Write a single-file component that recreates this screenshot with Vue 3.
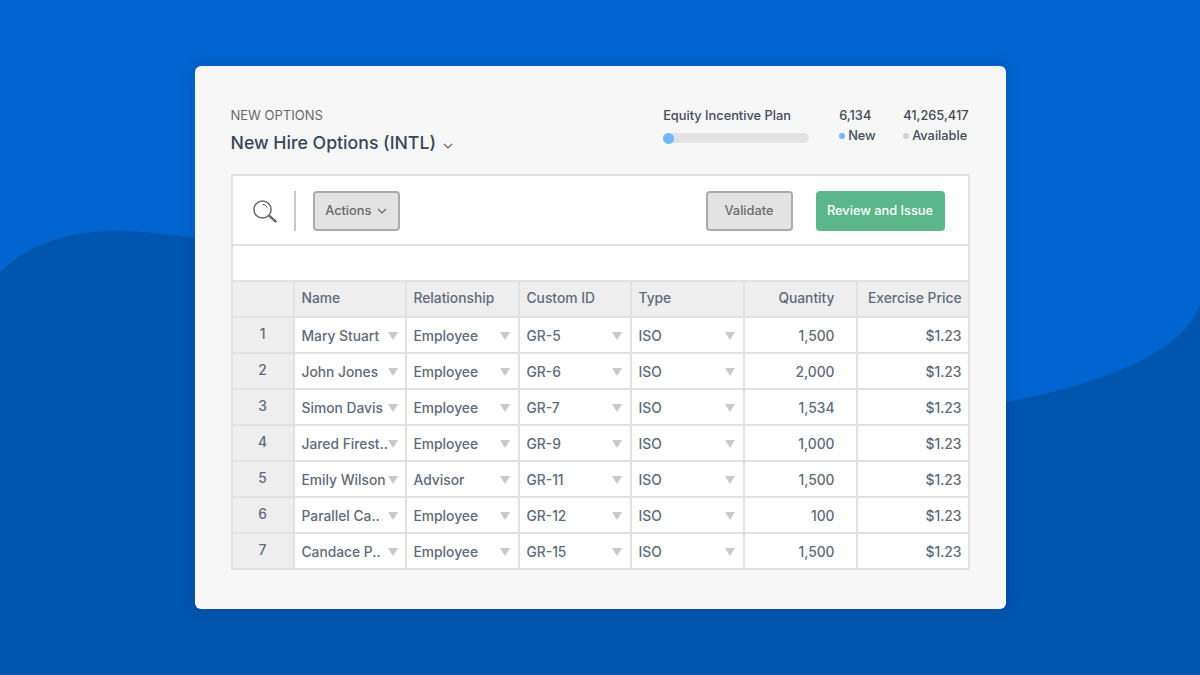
<script setup>
const columns = [
  { label: '', cls: '' },
  { label: 'Name', cls: '' },
  { label: 'Relationship', cls: '' },
  { label: 'Custom ID', cls: '' },
  { label: 'Type', cls: '' },
  { label: 'Quantity', cls: 'right qty' },
  { label: 'Exercise Price', cls: 'right price' }
]

const rows = [
  { name: 'Mary Stuart', rel: 'Employee', id: 'GR-5', qty: '1,500' },
  { name: 'John Jones', rel: 'Employee', id: 'GR-6', qty: '2,000' },
  { name: 'Simon Davis', rel: 'Employee', id: 'GR-7', qty: '1,534' },
  { name: 'Jared Firest..', rel: 'Employee', id: 'GR-9', qty: '1,000' },
  { name: 'Emily Wilson', rel: 'Advisor', id: 'GR-11', qty: '1,500' },
  { name: 'Parallel Ca..', rel: 'Employee', id: 'GR-12', qty: '100' },
  { name: 'Candace P..', rel: 'Employee', id: 'GR-15', qty: '1,500' }
]
</script>

<template>
  <div class="page">
    <svg class="bg" viewBox="0 0 1200 675" preserveAspectRatio="none">
      <path d="M0 272 C30 243 70 231 115 231 C190 231 300 256 520 312 C700 358 860 425 1006 402 C1080 388 1180 360 1200 305 L1200 675 L0 675 Z" />
    </svg>

    <section class="card">
      <header class="top">
        <div>
          <div class="eyebrow">NEW OPTIONS</div>
          <h1 class="title">
            New Hire Options (INTL)
            <svg class="chev" width="10" height="6" viewBox="0 0 10 6"><path d="M1 1l4 4 4-4" /></svg>
          </h1>
        </div>
        <div class="plan">
          <div class="plan-bar">
            <div class="plan-name">Equity Incentive Plan</div>
            <div class="track"><div class="fill"></div></div>
          </div>
          <div class="stat stat-new">
            <div>6,134</div>
            <div class="legend"><i class="dot blue"></i>New</div>
          </div>
          <div class="stat stat-left">
            <div>41,265,417</div>
            <div class="legend"><i class="dot grey"></i>Available</div>
          </div>
        </div>
      </header>

      <div class="sheet">
        <div class="toolbar">
          <svg class="search" width="26" height="26" viewBox="0 0 26 26">
            <circle cx="10.5" cy="10.5" r="8.6" />
            <path d="M17 16.6l7.4 6.6" class="handle" />
            <path d="M10.5 5.4a5.2 5.2 0 0 1 4.8 3.4" class="glint" />
          </svg>
          <span class="divider"></span>
          <button class="btn actions">
            Actions
            <svg class="chev" width="10" height="6" viewBox="0 0 10 6"><path d="M1 1l4 4 4-4" /></svg>
          </button>
          <button class="btn validate">Validate</button>
          <button class="btn issue">Review and Issue</button>
        </div>
        <div class="blank"></div>
        <div class="grid">
          <div v-for="col in columns" :key="col.label" class="cell head" :class="col.cls">{{ col.label }}</div>
          <template v-for="(row, i) in rows" :key="row.id">
            <div class="cell num">{{ i + 1 }}</div>
            <div class="cell data pick name"><span>{{ row.name }}</span><i class="arrow"></i></div>
            <div class="cell data pick"><span>{{ row.rel }}</span><i class="arrow"></i></div>
            <div class="cell data pick"><span>{{ row.id }}</span><i class="arrow"></i></div>
            <div class="cell data pick"><span>ISO</span><i class="arrow"></i></div>
            <div class="cell data right qty">{{ row.qty }}</div>
            <div class="cell data right price">$1.23</div>
          </template>
        </div>
      </div>
    </section>
  </div>
</template>

<style>
html, body { margin: 0; }
</style>

<style scoped>
.page {
  position: relative;
  width: 1200px;
  height: 675px;
  overflow: hidden;
  background: #0065d1;
  font-family: Inter, "Noto Sans", sans-serif;
  display: flex;
  justify-content: center;
  padding-top: 66px;
  box-sizing: border-box;
}
.bg {
  position: absolute;
  inset: 0;
  width: 100%;
  height: 100%;
}
.bg path { fill: #0055ad; }

.card {
  position: relative;
  width: 811px;
  height: 543px;
  box-sizing: border-box;
  padding: 36px;
  background: #f7f7f7;
  border-radius: 6px;
  box-shadow: 0 0 14px rgba(0, 40, 90, 0.25);
}
.top {
  display: flex;
  justify-content: space-between;
  height: 72px;
}
.eyebrow {
  font-size: 13px;
  line-height: 16px;
  margin-top: 5px;
  color: #68696b;
}
.title {
  margin: 8px 0 0;
  font-size: 17.7px;
  line-height: 24px;
  font-weight: 500;
  color: #36465a;
}
.title .chev { margin-left: 2px; }
.chev path {
  fill: none;
  stroke: #666;
  stroke-width: 1.2;
}
.plan {
  display: flex;
  font-size: 12.8px;
  line-height: 20px;
  font-weight: 500;
  color: #444c57;
  margin-top: 4px;
}
.plan-bar { width: 146px; margin-right: 30px; }
.plan-name { margin-bottom: 7px; }
.track {
  height: 10px;
  border-radius: 5px;
  background: #e3e3e3;
}
.fill {
  width: 11px;
  height: 11px;
  border-radius: 50%;
  background: #73b8f7;
}
.stat-new { width: 64px; }
.stat-left { margin-right: 1px; }
.legend { display: flex; align-items: center; }
.dot {
  width: 6px;
  height: 6px;
  border-radius: 50%;
  margin-right: 3px;
}
.dot.blue { background: #73b8f7; }
.dot.grey { background: #cfcfcf; }

.sheet {
  width: 739px;
  box-sizing: border-box;
  border: 2px solid #e2e2e2;
  background: #fff;
  color: #5f6b7a;
}
.toolbar {
  display: flex;
  align-items: center;
  height: 68px;
  padding: 2px 23px 0 19px;
  box-sizing: border-box;
  font-size: 12.8px;
  font-weight: 500;
}
.search { margin-top: 2px; }
.search circle, .search path {
  fill: none;
  stroke: #686868;
  stroke-width: 1.5;
}
.search .handle { stroke-width: 2.4; }
.search .glint { stroke-width: 1; }
.divider {
  width: 2px;
  height: 40px;
  background: #c8c8c8;
  margin: 0 17px 0 16px;
}
.btn {
  height: 40px;
  box-sizing: border-box;
  border-radius: 4px;
  font: inherit;
  color: #686c70;
  background: #e3e3e3;
  border: 2px solid #ababab;
  padding: 0 0 2px;
}
.actions { width: 87px; }
.actions .chev { margin-left: 2px; vertical-align: 1px; }
.validate { width: 87px; margin-left: auto; }
.issue {
  width: 129px;
  margin-left: 23px;
  border: 0;
  background: #5bb789;
  color: #fff;
}
.blank {
  height: 34px;
  border-top: 2px solid #e2e2e2;
  border-bottom: 2px solid #e2e2e2;
}
.grid {
  display: grid;
  grid-template-columns: 60px 110px 111px 110px 111px 111px 110px;
  grid-auto-rows: 34px;
  gap: 2px;
  background: #e2e2e2;
  font-size: 13.8px;
  font-weight: 500;
}
.cell {
  background: #fff;
  display: flex;
  align-items: center;
  padding: 0 7px;
  min-width: 0;
  white-space: nowrap;
}
.data { padding-top: 2px; }
.head { background: #eeeeee; padding-bottom: 2px; }
.right { justify-content: flex-end; }
.qty { padding-right: 21px; }
.price { padding-right: 6px; }
.num {
  background: #eeeeee;
  justify-content: center;
  padding: 0 0 2px;
}
.pick { justify-content: space-between; padding-right: 8px; }
.pick.name { padding-right: 7px; }
.arrow {
  flex: none;
  border-left: 5px solid transparent;
  border-right: 5px solid transparent;
  border-top: 8px solid #c9c9c9;
}
</style>
